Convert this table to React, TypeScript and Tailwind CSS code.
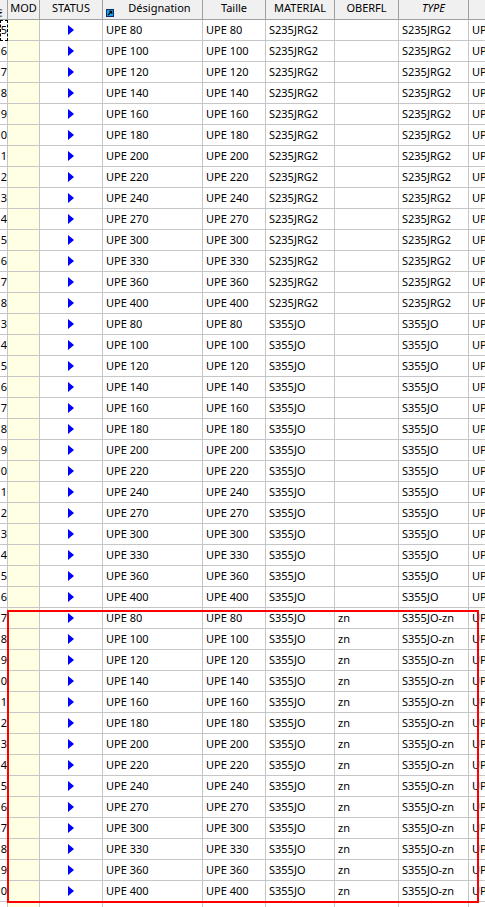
const sizes = [80, 100, 120, 140, 160, 180, 200, 220, 240, 270, 300, 330, 360, 400];

interface Row {
  nr: number;
  name: string;
  material: string;
  oberfl: string;
  type: string;
}

const groups = [
  { start: 15, material: "S235JRG2", oberfl: "", type: "S235JRG2" },
  { start: 33, material: "S355JO", oberfl: "", type: "S355JO" },
  { start: 47, material: "S355JO", oberfl: "zn", type: "S355JO-zn" },
  { start: 61, material: "S355JO", oberfl: "zn", type: "S355JO-zn" },
];

const rows: Row[] = groups.flatMap((g) =>
  sizes.map((s, i) => ({
    nr: g.start + i,
    name: `UPE ${s}`,
    material: g.material,
    oberfl: g.oberfl,
    type: g.type,
  }))
);

const cols = "grid grid-cols-[8px_32px_63px_100px_63px_69px_64px_70px_1fr]";
const head =
  "h-[20px] bg-[#f0f0f0] border-r border-b border-[#a0a0a0] flex justify-center pt-[1px] leading-[13px] overflow-hidden whitespace-nowrap";
const cell =
  "h-[21px] border-r border-b border-[#c6c6c6] flex items-center overflow-hidden whitespace-nowrap";

const LinkIcon = () => (
  <svg width="8" height="8" viewBox="0 0 8 8" className="absolute left-[3px] top-[9px]">
    <rect x="0.5" y="0.5" width="7" height="7" fill="#1ca0e8" stroke="#0b2f6b" />
    <path d="M2 6 L5.5 2.5 M3.2 2.3 H5.7 V4.8" stroke="#000" strokeWidth="1.1" fill="none" />
  </svg>
);

const Arrow = () => (
  <svg width="6" height="10" viewBox="0 0 6 10">
    <polygon points="0,0 6,5 0,10" fill="#0000ff" />
  </svg>
);

export default function App() {
  return (
    <div
      className="relative w-[485px] h-[907px] overflow-hidden bg-white text-[11px] text-black"
      style={{ fontFamily: '"Noto Sans", "Open Sans", sans-serif' }}
    >
      {/* header */}
      <div className={cols}>
        <div className={`${head} justify-start`}>
          <span className="text-[8px] leading-none -rotate-90 mt-[5px] -ml-[3px]">Nr</span>
        </div>
        <div className={head}>MOD</div>
        <div className={head}>STATUS</div>
        <div className={`${head} relative pl-[14px]`}>
          <LinkIcon />
          Désignation
        </div>
        <div className={head}>Taille</div>
        <div className={head}>MATERIAL</div>
        <div className={head}>OBERFL</div>
        <div className={`${head} italic`}>TYPE</div>
        <div className={`${head} border-r-0`}></div>
      </div>

      {/* body */}
      {rows.map((r, i) => (
        <div key={r.nr} className={cols}>
          <div
            className={`${cell} justify-end ${
              i === 0 ? "border border-dashed border-black" : ""
            }`}
          >
            {r.nr % 10}
          </div>
          <div className={`${cell} bg-[#ffffe4]`}></div>
          <div className={`${cell} justify-center pr-[1px]`}>
            <Arrow />
          </div>
          <div className={`${cell} pl-[3px]`}>{r.name}</div>
          <div className={`${cell} pl-[3px]`}>{r.name}</div>
          <div className={`${cell} pl-[3px]`}>{r.material}</div>
          <div className={`${cell} pl-[3px]`}>{r.oberfl}</div>
          <div className={`${cell} pl-[3px]`}>{r.type}</div>
          <div className={`${cell} pl-[3px] border-r-0`}>{r.name}</div>
        </div>
      ))}

      {/* selection frame */}
      <div className="absolute left-[7px] top-[610px] w-[472px] h-[293px] border-2 border-[#ff0000] pointer-events-none"></div>
    </div>
  );
}
